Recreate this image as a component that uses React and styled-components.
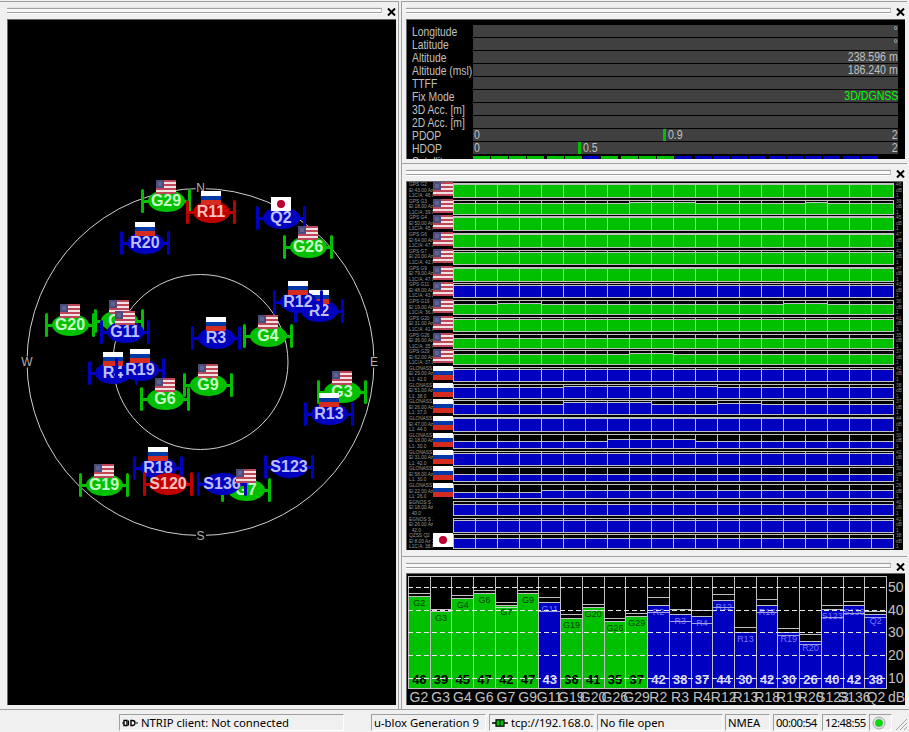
import React from "react";
import styled, { createGlobalStyle } from "styled-components";

const Global = createGlobalStyle`
  html, body { margin: 0; padding: 0; background: #f0f0f0; overflow: hidden; }
  body { font-family: "Liberation Sans", Arial, sans-serif; }
`;

const GRAY = "#a0a0a0";
const LINE = "#c0c0c0";
const PAINT = {
  G: { fill: "#00c000", text: "#c8ffc8", small: "#004000" },
  B: { fill: "#0000c0", text: "#c0c0ff", small: "#7878ff" },
  R: { fill: "#c00000", text: "#ffc0c0", small: "#ffc0c0" },
};

const Root = styled.div`
  width: 909px; height: 732px; display: flex; flex-direction: column; overflow: hidden; background: #f0f0f0;
`;
const Main = styled.div`
  height: 709px; flex: none; padding-top: 1px; box-sizing: border-box; display: flex; overflow: hidden;
`;
const LeftColumn = styled.div`
  width: 399px; box-sizing: border-box; border-right: 1px solid ${GRAY}; display: flex;
`;
const RightColumn = styled.div`
  width: 506px; margin-left: 2px; box-sizing: border-box; border-left: 1px solid ${GRAY}; display: flex; flex-direction: column;
`;
const Pane = styled.section`
  box-sizing: border-box; border-top: 1px solid ${GRAY}; display: flex; flex-direction: column; min-height: 0; min-width: 0; overflow: hidden;
  flex: ${p => (p.$h ? `0 0 ${p.$h}px` : "1")};
  padding: 0 2px ${p => p.$bottom ?? 4}px ${p => p.$left ?? 4}px;
`;
const Caption = styled.div`
  height: ${p => p.$h ?? 17}px; flex: none; display: flex; align-items: flex-start; padding-top: 6px; box-sizing: border-box;
`;
const Grip = styled.div`
  flex: 1; height: 5px; box-sizing: border-box; background: #f8f8f8; margin-right: 2px;
  border-top: 1px solid ${GRAY}; border-bottom: 1px solid ${GRAY}; border-right: 1px solid ${LINE};
  box-shadow: 0 1px 0 #fff, 0 -1px 0 #e4e4e4;
`;
const CloseBox = styled.div`
  width: 14px; height: 8px; margin-right: -2px; flex: none; display: flex; justify-content: center; align-items: center;
`;
const CloseIcon = () => (
  <svg width="9" height="8" viewBox="0 0 9 8"><path d="M1 .5 8 7.5M8 .5 1 7.5" stroke="#000" strokeWidth="2" /></svg>
);
const PaneHead = ({ h }) => (
  <Caption $h={h}><Grip /><CloseBox><CloseIcon /></CloseBox></Caption>
);

/* Flags */
const UsFlag = () => (
  <svg width="20" height="14" viewBox="0 0 20 14" shapeRendering="crispEdges" style={{ display: "block" }}>
    <rect width="20" height="14" fill="#f3e0e2" />
    {[0, 4, 8, 12].map(y => <rect key={y} y={y} width="20" height="2" fill="#bd4658" />)}
    <rect y="6" width="20" height="1" fill="#f3e0e2" />
    <rect width="8" height="8" fill="#4c4c7c" />
    <rect x="2" y="2" width="4" height="4" fill="#62628e" />
  </svg>
);
const RuFlag = () => (
  <svg width="20" height="14" viewBox="0 0 20 14" shapeRendering="crispEdges" style={{ display: "block" }}>
    <rect width="20" height="5" fill="#fff" />
    <rect y="5" width="20" height="4" fill="#0039a6" />
    <rect y="9" width="20" height="5" fill="#d52b1e" />
  </svg>
);
const JpFlag = () => (
  <svg width="20" height="14" viewBox="0 0 20 14" style={{ display: "block" }}>
    <rect width="20" height="14" fill="#fff" />
    <circle cx="10" cy="7" r="4" fill="#bc002d" />
  </svg>
);
const FLAGS = { us: UsFlag, ru: RuFlag, jp: JpFlag };
const Flag = ({ of }) => {
  const C = FLAGS[of];
  return C ? <C /> : null;
};

/* Sky view */
const SKY_X = 7, SKY_Y = 19;
const Sky = styled.div`
  flex: 1; min-height: 0; position: relative; background: #000; overflow: hidden;
  border-top: 1px solid #696969; border-left: 1px solid #696969;
`;
const Rings = styled.svg`
  position: absolute; left: -1px; top: -1px; width: 389px; height: 688px;
`;
const Compass = styled.span`
  position: absolute; transform: translate(-50%, -50%); background: #000; color: #b0b0b0;
  font-size: 12px; line-height: 11px; padding: 0 1px;
`;
const SatNode = styled.div`
  position: absolute; width: 50px; height: 24px; margin: -12px 0 0 -25px;
  display: flex; align-items: center; justify-content: center;
  &::before {
    content: ""; position: absolute; left: 0; right: 0; top: 10.5px; height: 3px;
    background: ${p => PAINT[p.$k].fill};
  }
`;
const Whisker = styled.i`
  position: absolute; top: 0; bottom: 0; width: 3px; border-radius: 1.5px;
  background: ${p => PAINT[p.$k].fill};
  ${p => (p.$end ? "right: 0;" : "left: 0;")}
`;
const SatBody = styled.div`
  position: relative; width: 37px; height: 22px; border-radius: 50%;
  background: ${p => PAINT[p.$k].fill}; color: ${p => PAINT[p.$k].text};
  display: flex; align-items: center; justify-content: center;
  font-size: 16px; font-weight: 700; line-height: 22px; white-space: nowrap;
`;
const SatFlag = styled.div`
  position: absolute; left: 15px; top: -9px; ${p => p.$over && "z-index: 2;"}
`;
const SATS = [
  ["G2", 120, 321, "G", "us"], ["G20", 71, 325, "G", "us"], ["G11", 126, 332, "B", "us"],
  ["G29", 167, 201, "G", "us"], ["R11", 212, 212, "R", "ru"], ["R20", 145.5, 243.5, "B", "ru"],
  ["Q2", 281.5, 218, "B", "jp"], ["G26", 308.5, 247.5, "G", "us"],
  ["R2", 320, 311, "B", "ru"], ["R12", 299, 302, "B", "ru"], ["R3", 217, 338, "B", "ru"],
  ["G4", 269, 336, "G", "us"], ["R4", 113.5, 373, "B", "ru"], ["R19", 141, 370, "B", "ru"],
  ["G9", 209, 385, "G", "us"], ["G6", 165.5, 399, "G", "us"], ["G3", 343, 392, "G", "us"],
  ["R13", 330, 414, "B", "ru"], ["G19", 105, 485, "G", "us"], ["R18", 158.5, 468, "B", "ru"],
  ["S120", 168.5, 484, "R"], ["G7", 247, 490, "G", "us", true], ["S136", 222.5, 484.5, "B"],
  ["S123", 289.5, 467, "B"],
];

const SkyView = () => (
  <Sky>
    <Rings viewBox="0 0 389 688">
      <circle cx={200.5 - SKY_X} cy={362 - SKY_Y} r="173.5" fill="none" stroke="#d0d0d0" strokeWidth="1" />
      <circle cx={200.5 - SKY_X} cy={362 - SKY_Y} r="87.5" fill="none" stroke="#d0d0d0" strokeWidth="1" />
    </Rings>
    {[["N", 200.5, 188], ["S", 200.5, 536], ["W", 27, 362], ["E", 374, 362]].map(([t, x, y]) => (
      <Compass key={t} style={{ left: x - SKY_X - 1, top: y - SKY_Y - 1 }}>{t}</Compass>
    ))}
    {SATS.map(([name, x, y, k, flag, over]) => (
      <SatNode key={name} $k={k} style={{ left: Math.floor(x - SKY_X - 1.2), top: Math.floor(y - SKY_Y - 1) }}>
        <Whisker $k={k} />
        <Whisker $k={k} $end />
        <SatBody $k={k}>{name}</SatBody>
        {flag && <SatFlag $over={over}><Flag of={flag} /></SatFlag>}
      </SatNode>
    ))}
  </Sky>
);

/* Data panel */
const InfoFrame = styled.div`
  flex: 1; min-height: 0; overflow: hidden; background: #000; box-sizing: border-box;
  border-top: 1px solid #696969; border-left: 1px solid #696969;
  padding: 5px 7px 0 5px; display: flex; flex-direction: column; gap: 1px;
`;
const InfoRow = styled.div`
  flex: none; height: 12px; display: grid; grid-template-columns: 61px 425px; grid-template-rows: 12px;
`;
const InfoLabel = styled.span`
  color: #c0c0c0; font-size: 12px; line-height: 14px; height: 12px; white-space: nowrap;
  transform: scaleX(.86); transform-origin: left center;
`;
const InfoBar = styled.div`
  position: relative; height: 12px; background: #404040; display: flex; justify-content: space-between; overflow: hidden;
`;
const InfoValue = styled.span`
  margin-left: auto; color: ${p => p.$c || "#c0c0c0"}; font-size: 12px; line-height: 13px; white-space: nowrap;
  transform: scaleX(.88); transform-origin: right center;
`;
const ScaleText = styled.span`
  color: #c0c0c0; font-size: 12px; line-height: 13px;
  transform: scaleX(.88); transform-origin: ${p => (p.$end ? "right" : "left")} center;
  padding-left: ${p => (p.$end ? 0 : 1)}px;
`;
const DopMark = styled.div`
  position: absolute; top: 0; bottom: 0; display: flex; gap: 1px;
`;
const DopTick = styled.i`
  width: 3px; height: 12px; background: #00c000;
`;
const SegRow = styled.div`
  display: flex; gap: 2.67px; padding-top: 1px;
`;
const SegGroup = styled.div`
  display: flex; gap: .67px;
`;
const Seg = styled.i`
  width: 17.33px; height: 12px; background: ${p => PAINT[p.$k].fill};
`;

const INFO = [
  ["Longitude", "°"], ["Latitude", "°"], ["Altitude", "238.596 m"], ["Altitude (msl)", "186.240 m"],
  ["TTFF", ""], ["Fix Mode", "3D/DGNSS", "#00ff00"], ["3D Acc. [m]", ""], ["2D Acc. [m]", ""],
];
const DOPS = [["PDOP", 0.9], ["HDOP", 0.5]];
const DOP_POS = { PDOP: 190, HDOP: 105 };
const SEG_GROUPS = ["GGGG", "GGBG", "GGGB", "BBBB", "BBBB", "BB"];

const InfoPanel = () => (
  <InfoFrame>
    {INFO.map(([l, v, c]) => (
      <InfoRow key={l}>
        <InfoLabel>{l}</InfoLabel>
        <InfoBar>{v && <InfoValue $c={c}>{v}</InfoValue>}</InfoBar>
      </InfoRow>
    ))}
    {DOPS.map(([l, v]) => (
      <InfoRow key={l}>
        <InfoLabel>{l}</InfoLabel>
        <InfoBar>
          <ScaleText>0</ScaleText>
          <DopMark style={{ left: DOP_POS[l] }}><DopTick /><ScaleText>{v}</ScaleText></DopMark>
          <ScaleText $end>2</ScaleText>
        </InfoBar>
      </InfoRow>
    ))}
    <InfoRow>
      <InfoLabel>Satellites</InfoLabel>
      <SegRow>
        {SEG_GROUPS.map((g, i) => (
          <SegGroup key={i}>{g.split("").map((k, j) => <Seg key={j} $k={k} />)}</SegGroup>
        ))}
      </SegRow>
    </InfoRow>
  </InfoFrame>
);

/* Signal list */
const SIGNALS = [
  ["GPS G2", "El 43.00 Az 2", "L1C/A: 46.0", 46, "G", "us", []],
  ["GPS G3", "El 18.00 Az 1", "L1C/A: 39.0", 39, "G", "us", [[8, 10, 1], [16, 16, 1]]],
  ["GPS G4", "El 50.00 Az 8", "L1C/A: 45.0", 45, "G", "us", []],
  ["GPS G6", "El 64.00 Az 2", "L1C/A: 47.0", 47, "G", "us", []],
  ["GPS G7", "El 20.00 Az 1", "L1C/A: 42.0", 42, "G", "us", []],
  ["GPS G9", "El 79.00 Az 1", "L1C/A: 47.0", 47, "G", "us", []],
  ["GPS G11", "El 48.00 Az 2", "L1C/A: 43.0", 43, "B", "us", []],
  ["GPS G19", "El 19.00 Az 2", "L1C/A: 36.0", 36, "G", "us", [[2, 3, 1], [15, 16, 1]]],
  ["GPS G20", "El 31.00 Az 2", "L1C/A: 41.0", 41, "G", "us", []],
  ["GPS G26", "El 36.00 Az 6", "L1C/A: 35.0", 35, "G", "us", []],
  ["GPS G29", "El 62.00 Az 3", "L1C/A: 37.0", 37, "G", "us", [[8, 9, 1]]],
  ["GLONASS R2", "El 29.00 Az 5", "L1: 42.0", 42, "B", "ru", []],
  ["GLONASS R3", "El 51.00 Az 1", "L1: 38.0", 38, "B", "ru", [[5, 8, 1], [9, 11, 1]]],
  ["GLONASS R4", "El 26.00 Az 2", "L1: 37.0", 37, "B", "ru", [[5, 8, 2], [12, 13, 1]]],
  ["GLONASS R12", "El 47.00 Az 4", "L1: 44.0", 44, "B", "ru", [[4, 5, 1]]],
  ["GLONASS R13", "El 18.00 Az 1", "L1: 30.0", 30, "B", "ru", [[7, 10, 2]]],
  ["GLONASS R18", "El 31.00 Az 2", "L1: 42.0", 42, "B", "ru", []],
  ["GLONASS R19", "El 58.00 Az 2", "L1: 30.0", 30, "B", "ru", []],
  ["GLONASS R20", "El 22.00 Az 3", "L1: 26.0", 26, "B", "ru", [[4, 19, 2]]],
  ["EGNOS S 123", "El 18.00 Az 140.00", ": 40.0", 40, "B", null, []],
  ["EGNOS S 136", "El 26.00 Az 170.00", ": 42.0", 42, "B", null, []],
  ["QZSS Q2", "El 8.00 Az 28", "L1C/A: 38.0", 38, "B", "jp", []],
];
const cellBoost = (steps, i) => steps.reduce((a, [s, e, d]) => (i >= s && i <= e ? a + d : a), 0);

const SignalFrame = styled.div`
  flex: 1; min-height: 0; background: #000; box-sizing: border-box; overflow: hidden; margin-right: 2px;
  border-top: 1px solid #696969; border-left: 1px solid #696969;
  display: grid; grid-template-rows: repeat(22, 1fr);
`;
const SignalRow = styled.div`
  position: relative; display: grid; grid-template-columns: 2px 24px 20px 441px 9px; min-height: 0; overflow: hidden;
`;
const TinyText = styled.div`
  grid-column: 2; color: #9a9a9a; font-size: 4.8px; line-height: 5.5px; white-space: nowrap; overflow: hidden;
`;
const RowFlag = styled.div`
  grid-column: 3; position: relative; z-index: 1; height: 14px; background: #000;
`;
const Track = styled.div`
  grid-column: 4; height: 15px; margin-top: 1px; display: flex; box-sizing: border-box;
  border-top: 1px solid ${LINE}; border-bottom: 1px solid ${LINE}; border-right: 1px solid ${LINE};
`;
const Cell = styled.div`
  flex: 1; display: flex; flex-direction: column; justify-content: flex-end; border-left: 1px solid ${LINE}; min-width: 0;
`;
const CellFill = styled.div`
  box-sizing: border-box; background: ${p => PAINT[p.$k].fill}; border-top: 1px solid ${LINE};
`;
const EndText = styled.div`
  grid-column: 5; color: #8a8a8a; font-size: 4.8px; line-height: 5.5px; padding-left: 2px; overflow: hidden;
`;

const SignalPanel = () => (
  <SignalFrame>
    {SIGNALS.map(([a, b, c, v, k, flag, steps]) => (
      <SignalRow key={a}>
        <TinyText>{a}<br />{b}<br />{c}</TinyText>
        <RowFlag>{flag && <Flag of={flag} />}</RowFlag>
        <Track>
          {Array.from({ length: 20 }, (_, i) => (
            <Cell key={i}>
              <CellFill $k={k} style={{ height: Math.min(13, (v - 12) * 0.4 + cellBoost(steps, i)) }} />
            </Cell>
          ))}
        </Track>
        <EndText>{v}<br />dB<br />1</EndText>
      </SignalRow>
    ))}
  </SignalFrame>
);

/* Chart */
const BARS = [
  ["G2", 46, "G", 2], ["G3", 39, "G", 2.3], ["G4", 45, "G", 2.7], ["G6", 47, "G", 3], ["G7", 42, "G", 2.3, 1],
  ["G9", 47, "G", 3], ["G11", 43, "B", 5.3, 8], ["G19", 36, "G", 3.3], ["G20", 41, "G", 2.3, 2], ["G26", 35, "G", 1.7],
  ["G29", 37, "G", 3], ["R2", 42, "B", 7.6, 6], ["R3", 38, "B", 4, 6.7], ["R4", 37, "B", 6, 6], ["R12", 44, "B", 5.7, 6],
  ["R13", 30, "B", 4.3], ["R18", 42, "B", 5, 6], ["R19", 30, "B", 3, 2], ["R20", 26, "B", 6.7, 2], ["S123", 40, "B", 3.3, 7],
  ["S136", 42, "B", 2.7, 7], ["Q2", 38, "B", 2.7, 2],
];
const ChartFrame = styled.div`
  flex: 1; min-height: 0; background: #000; box-sizing: border-box;
  border-top: 1px solid #696969; border-left: 1px solid #696969; overflow: hidden;
  display: grid; grid-template-columns: 479px 1fr; grid-template-rows: 113px 1fr; padding: 2px 0 0 1px;
`;
const Plot = styled.div`
  position: relative; display: flex; border-top: 1px solid ${LINE}; border-bottom: 1px solid ${LINE}; border-right: 1px solid ${LINE};
`;
const Bar = styled.div`
  flex: 1; min-width: 0; display: flex; flex-direction: column; border-left: 1px solid ${LINE};
`;
const BarPeak = styled.div`
  flex: none; box-sizing: content-box; border-bottom: 1px solid ${LINE};
`;
const BarGap = styled.div`
  flex: none;
`;
const BarFill = styled.div`
  position: relative; flex: 1; box-sizing: border-box; border-top: 1px solid ${LINE};
  background: ${p => PAINT[p.$k].fill}; display: flex; flex-direction: column; align-items: center; justify-content: space-between;
`;
const BarLower = styled.i`
  position: absolute; left: 0; right: 0; height: 1px; background: ${p => (p.$k === "B" ? "#a0a0e0" : "#c0e0c0")};
`;
const BarName = styled.span`
  color: ${p => PAINT[p.$k].small}; font-size: 9px; line-height: 10px; margin-top: 1px; white-space: nowrap;
`;
const BarValue = styled.span`
  color: ${p => (p.$k === "B" ? "#d8d8ff" : "#000")}; font-size: 13px; font-weight: 700; line-height: 12px; margin-bottom: 2px;
`;
const GridLines = styled.div`
  position: absolute; inset: 0; display: flex; flex-direction: column; padding-top: 10px; gap: 21.7px;
`;
const DashLine = styled.i`
  display: block; height: 1px; flex: none;
  background: repeating-linear-gradient(90deg, #e8e8e8 0 5px, transparent 5px 8px);
`;
const Axis = styled.div`
  display: flex; flex-direction: column; padding-top: 0;
`;
const AxisTick = styled.span`
  height: 22.7px; color: #c0c0c0; font-size: 14px; line-height: 22.7px; padding-left: 1px;
`;
const NameRow = styled.div`
  display: flex; padding-top: 1px;
`;
const NameCell = styled.span`
  flex: 1; min-width: 0; display: flex; justify-content: center;
  color: #c0c0c0; font-size: 14px; line-height: 14px; white-space: nowrap;
`;
const Db = styled.span`
  color: #c0c0c0; font-size: 14px; line-height: 14px; padding-top: 1px; padding-left: 1px; white-space: nowrap;
`;

const Chart = () => (
  <ChartFrame>
    <Plot>
      {BARS.map(([n, v, k, gap, lower]) => {
        const fillTop = 10 + (50 - v) * 2.27;
        return (
          <Bar key={n}>
            <BarPeak style={{ height: Math.max(0, fillTop - gap - 1) }} />
            <BarGap style={{ height: gap - 0.5 }} />
            <BarFill $k={k}>
              <BarName $k={k}>{n}</BarName>
              {lower && <BarLower $k={k} style={{ top: lower }} />}
              <BarValue $k={k}>{v}</BarValue>
            </BarFill>
          </Bar>
        );
      })}
      <GridLines>{[50, 40, 30, 20, 10].map(d => <DashLine key={d} />)}</GridLines>
    </Plot>
    <Axis>{[50, 40, 30, 20, 10].map(d => <AxisTick key={d}>{d}</AxisTick>)}</Axis>
    <NameRow>{BARS.map(([n]) => <NameCell key={n}>{n}</NameCell>)}</NameRow>
    <Db>dB</Db>
  </ChartFrame>
);

/* Status bar */
const StatusBar = styled.footer`
  height: 23px; flex: none; box-sizing: border-box; border-top: 1px solid ${GRAY}; padding-top: 4px; display: flex; position: relative;
`;
const StatusCell = styled.div`
  flex: none; width: ${p => p.$w}px; margin-left: ${p => p.$gap ?? 2}px; height: 17px; box-sizing: border-box;
  border-top: 1px solid ${GRAY}; border-left: 1px solid ${GRAY}; border-bottom: 1px solid #fff; border-right: 1px solid #fff;
  display: flex; align-items: center; gap: 3px; padding-left: 2px; overflow: hidden;
  font-family: "Noto Sans", sans-serif; font-size: 11.3px; line-height: 15px; color: #000; white-space: nowrap;
  letter-spacing: ${p => (p.$tight ? "-.5px" : "0")};
`;
const ResizeGrip = styled.svg`
  position: absolute; right: 1px; bottom: 1px; width: 14px; height: 14px;
`;
const PlugOff = () => (
  <svg width="16" height="8" viewBox="0 0 16 8" style={{ flex: "none" }}>
    <path d="M0 4h2M14 4h2" stroke="#000" strokeWidth="1" />
    <path d="M2 1.5h3v5H2zM9 1.5h1.5a2.5 2.5 0 0 1 0 5H9z" fill="#fff" stroke="#000" strokeWidth="1.4" />
    <path d="M6.5 1.5v5" stroke="#000" strokeWidth="1.2" />
  </svg>
);
const PlugOn = () => (
  <svg width="16" height="8" viewBox="0 0 16 8" style={{ flex: "none" }}>
    <path d="M0 4h4M12 4h4" stroke="#000" strokeWidth="1.4" />
    <rect x="4" y=".8" width="8" height="6.4" fill="#00c000" stroke="#000" strokeWidth="1.2" />
    <path d="M8 1v6" stroke="#000" strokeWidth="1" />
  </svg>
);
const Led = () => (
  <svg width="14" height="14" viewBox="0 0 14 14" style={{ flex: "none" }}>
    <circle cx="7" cy="7" r="6" fill="#e0e0e0" stroke="#a8a8a8" />
    <circle cx="7" cy="7" r="3.6" fill="#00e000" stroke="#40b040" strokeWidth=".8" />
  </svg>
);

export default function App() {
  return (
    <Root>
      <Global />
      <Main>
        <LeftColumn>
          <Pane $left={7}>
            <PaneHead />
            <SkyView />
          </Pane>
        </LeftColumn>
        <RightColumn>
          <Pane $h={162}><PaneHead /><InfoPanel /></Pane>
          <Pane $h={393} $bottom={6}><PaneHead /><SignalPanel /></Pane>
          <Pane $h={153}><PaneHead h={16} /><Chart /></Pane>
        </RightColumn>
      </Main>
      <StatusBar>
        <StatusCell $w={225} $gap={119}><PlugOff />NTRIP client: Not connected</StatusCell>
        <StatusCell $w={115} $gap={27}>u-blox Generation 9</StatusCell>
        <StatusCell $w={106} $gap={3}><PlugOn />tcp://192.168.0.1:2101</StatusCell>
        <StatusCell $w={126}>No file open</StatusCell>
        <StatusCell $w={45}>NMEA</StatusCell>
        <StatusCell $w={46} $gap={3} $tight>00:00:54</StatusCell>
        <StatusCell $w={45} $gap={3} $tight>12:48:55</StatusCell>
        <StatusCell $w={23}><Led /></StatusCell>
        <ResizeGrip viewBox="0 0 14 14">
          <path d="M13 2 2 13M13 6 6 13M13 10 10 13" stroke="#a0a0a0" strokeWidth="1" />
        </ResizeGrip>
      </StatusBar>
    </Root>
  );
}
